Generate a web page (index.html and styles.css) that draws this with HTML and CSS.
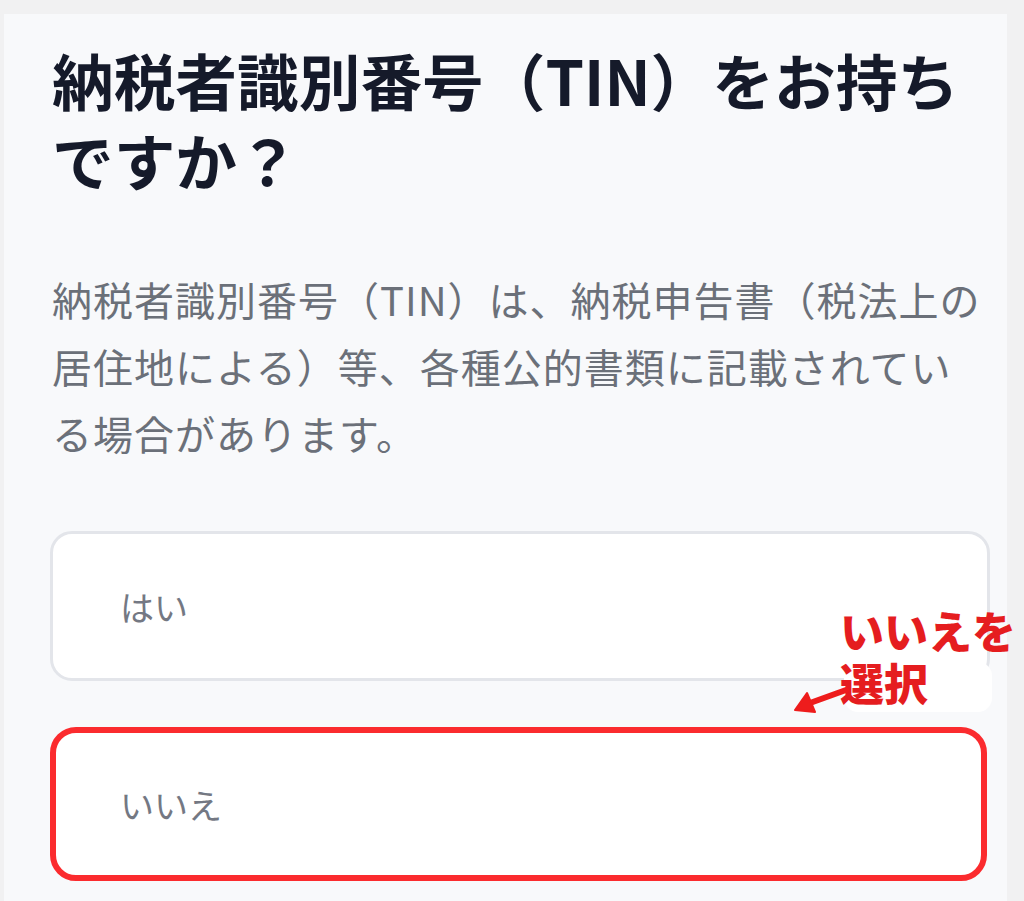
FILE: index.html
```html
<!DOCTYPE html>
<html lang="ja">
<head>
<meta charset="utf-8">
<title>TIN</title>
<link rel="stylesheet" href="styles.css">
</head>
<body>
<div class="card">
  <h1 class="title">納税者識別番号（TIN）をお持ちですか？</h1>
  <p class="desc">納税者識別番号（TIN）は、納税申告書（税法上の居住地による）等、各種公的書類に記載されている場合があります。</p>
  <div class="options">
    <div class="option">はい</div>
    <div class="option option-selected">いいえ</div>
  </div>
  <div class="note">
    <span class="note-bg"></span>
    <span class="note-line note-line-1">いいえを</span>
    <span class="note-line note-line-2">選択</span>
    <svg class="note-arrow" width="60" height="34" viewBox="0 0 60 34">
      <path d="M52 8 L16 21" stroke="#ee1c1c" stroke-width="6" stroke-linecap="round" fill="none"/>
      <path d="M1 28 L13 11 L21 30 Z" fill="#ee1c1c" stroke="#ee1c1c" stroke-width="2" stroke-linejoin="round"/>
    </svg>
  </div>
</div>
</body>
</html>
```
FILE: styles.css
```css
html, body {
  margin: 0;
  padding: 0;
}
body {
  background: #f1f1f2;
  width: 1024px;
  height: 901px;
  overflow: hidden;
  font-family: "Noto Sans CJK JP", "Noto Sans", sans-serif;
}
.card {
  position: relative;
  margin: 14px 0 0 4px;
  width: 1003px;
  height: 887px;
  background: #f8f9fb;
  box-sizing: border-box;
  padding: 25px 0 0 48px;
}
.title {
  margin: 0;
  width: 930px;
  font-size: 61.7px;
  line-height: 80px;
  font-weight: 700;
  color: #151a2a;
}
.desc {
  margin: 67px 0 0 0;
  width: 930px;
  font-size: 40px;
  line-height: 67px;
  letter-spacing: 1px;
  color: #6b7079;
}
.options {
  margin-top: 64px;
  display: flex;
  flex-direction: column;
  gap: 46px;
  width: 940px;
  margin-left: -2px;
}
.option {
  height: 150px;
  box-sizing: border-box;
  border: 3px solid #e3e5ea;
  border-radius: 22px;
  background: #ffffff;
  display: flex;
  align-items: center;
  padding-left: 67px;
  font-size: 34px;
  color: #747883;
}
.option-selected {
  height: 154px;
  border: 6px solid #fb2b2e;
  border-radius: 26px;
  padding-left: 64px;
  margin-right: 3px;
}
.note {
  position: absolute;
  left: 786px;
  top: 586px;
  width: 230px;
  height: 130px;
}
.note-bg {
  position: absolute;
  left: 54px;
  top: 62px;
  width: 148px;
  height: 50px;
  background: #ffffff;
  border-radius: 14px;
}
.note-line {
  position: absolute;
  left: 50px;
  font-size: 44px;
  line-height: 44px;
  height: 44px;
  font-weight: 900;
  color: #e51d1f;
  white-space: nowrap;
}
.note-line-1 {
  top: 8px;
}
.note-line-2 {
  top: 60px;
}
.note-arrow {
  position: absolute;
  left: 4px;
  top: 82px;
}
```
